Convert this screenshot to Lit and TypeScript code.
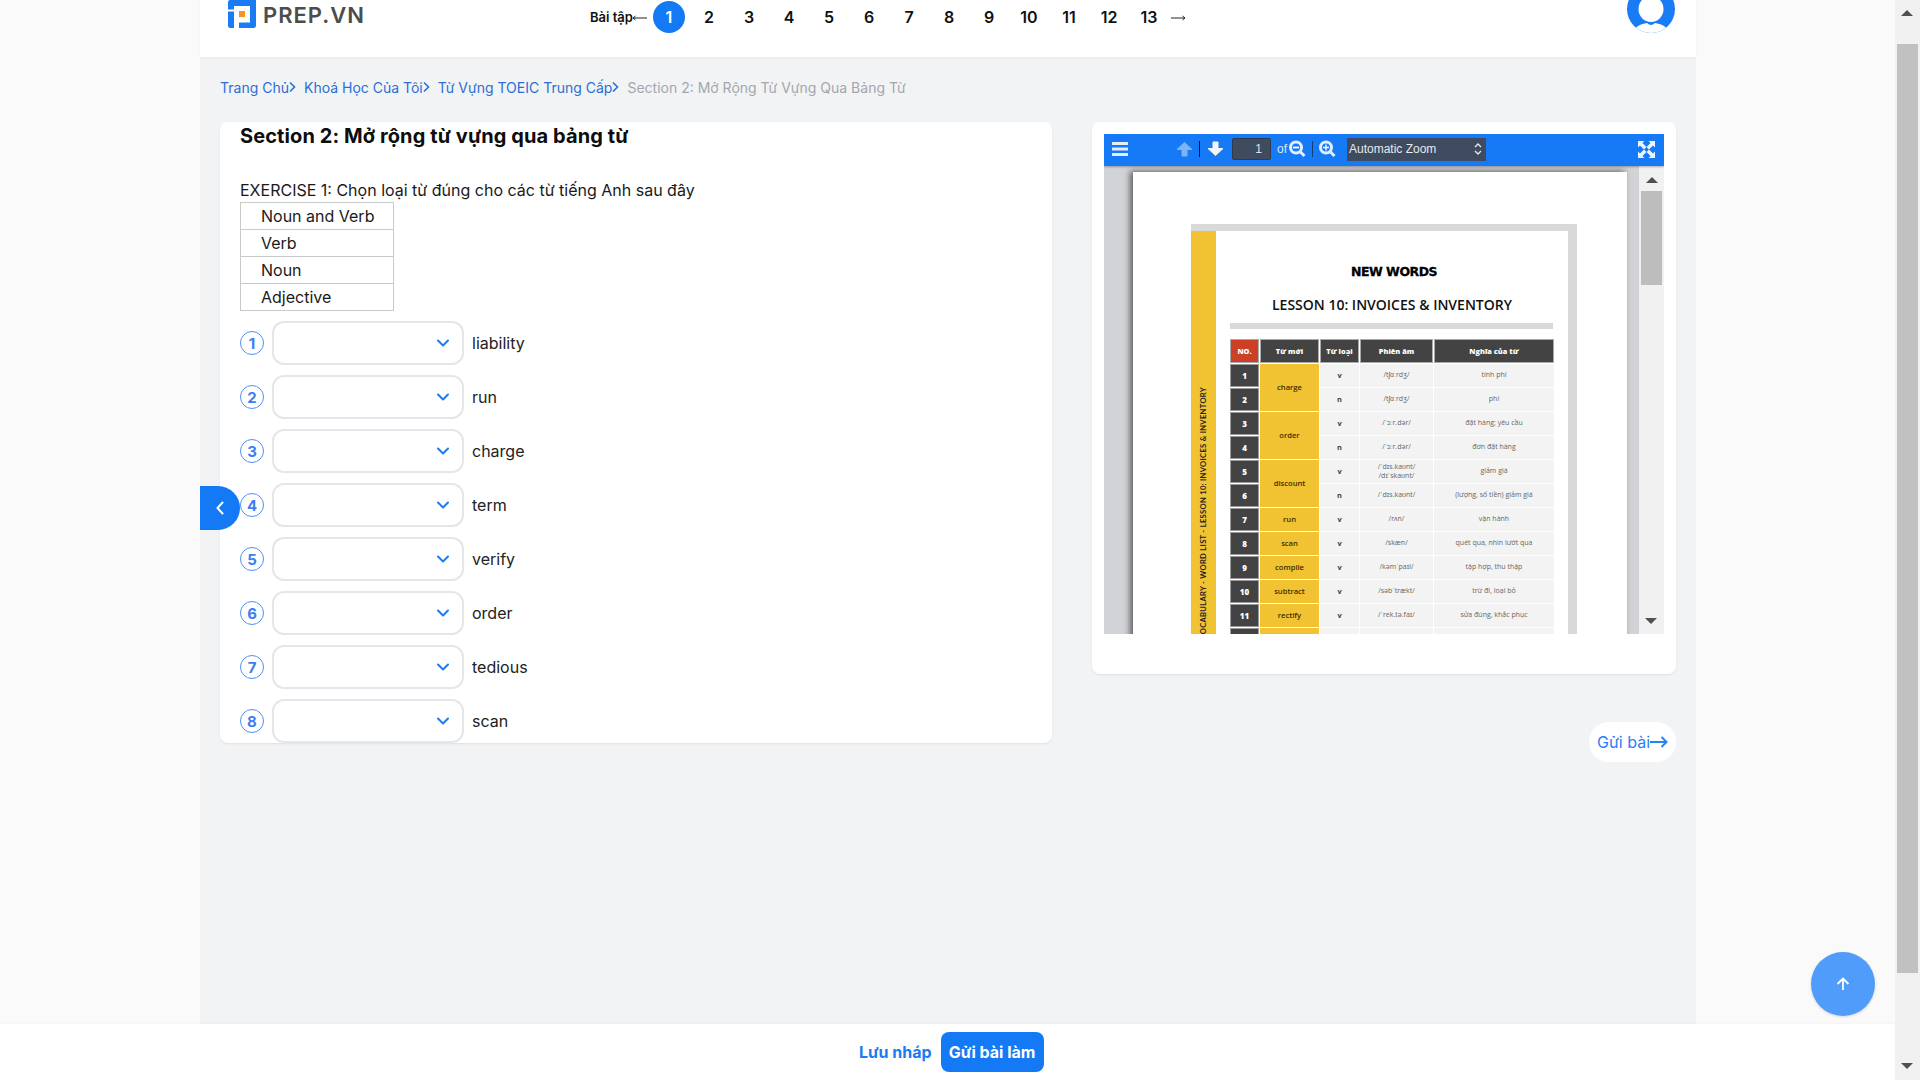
import { LitElement, html, css, svg } from "lit";
import { customElement } from "lit/decorators.js";

const chevron = svg`<path d="M1 1.5 L6 6.5 L11 1.5" fill="none" stroke="#1a7cf5" stroke-width="2" stroke-linecap="round" stroke-linejoin="round"/>`;

const rows = [
  ["1", "charge", 2, "v", "/tʃɑːrdʒ/", "tính phí"],
  ["2", "", 0, "n", "/tʃɑːrdʒ/", "phí"],
  ["3", "order", 2, "v", "/ˈɔːr.dər/", "đặt hàng; yêu cầu"],
  ["4", "", 0, "n", "/ˈɔːr.dər/", "đơn đặt hàng"],
  ["5", "discount", 2, "v", "/ˈdɪs.kaʊnt/\n/dɪˈskaʊnt/", "giảm giá"],
  ["6", "", 0, "n", "/ˈdɪs.kaʊnt/", "(lượng, số tiền) giảm giá"],
  ["7", "run", 1, "v", "/rʌn/", "vận hành"],
  ["8", "scan", 1, "v", "/skæn/", "quét qua, nhìn lướt qua"],
  ["9", "compile", 1, "v", "/kəmˈpaɪl/", "tập hợp, thu thập"],
  ["10", "subtract", 1, "v", "/səbˈtrækt/", "trừ đi, loại bỏ"],
  ["11", "rectify", 1, "v", "/ˈrek.tə.faɪ/", "sửa đúng, khắc phục"],
  ["", "", 1, "", "", ""],
] as const;

const words = ["liability", "run", "charge", "term", "verify", "order", "tedious", "scan"];
const kinds = ["Noun and Verb", "Verb", "Noun", "Adjective"];
const pages = Array.from({ length: 13 }, (_, i) => i + 1);

@customElement("app-root")
export class AppRoot extends LitElement {
  static styles = css`
    :host { display: flex; width: 1920px; height: 1080px; overflow: hidden; background: #fafafa; font-family: Inter, "Noto Sans", sans-serif; color: #1a1a1a; position: relative; }
    * { box-sizing: border-box; }
    .main { flex: 1; min-width: 0; display: flex; flex-direction: column; position: relative; }
    .wrap { flex: 1; width: 1496px; margin-left: 200px; background: #f2f3f5; display: flex; flex-direction: column; min-height: 0; position: relative; }

    .header { height: 57px; background: #fff; display: flex; align-items: flex-start; position: relative; overflow: hidden; box-shadow: 0 1px 2px rgba(0,0,0,.05); }
    .logo { display: flex; align-items: flex-start; margin-left: 28px; width: 362px; gap: 7px; }
    .logo svg { display: block; }
    .brand { font: 600 22px/1 Inter, sans-serif; color: #4d4d4d; letter-spacing: 1px; margin-top: 4px; }
    .pager { display: flex; align-items: center; height: 34px; font-weight: 600; }
    .pager .lbl { font-size: 13px; color: #111; width: 42px; white-space: nowrap; }
    .arrow { display: block; margin-top: 2px; }
    .pages { display: flex; margin-left: 5px; }
    .pg { width: 32px; height: 32px; margin-right: 8px; border-radius: 50%; display: flex; align-items: center; justify-content: center; font-size: 16px; color: #111; }
    .pg.on { background: #1479f5; color: #fff; }
    .pages + .arrow { margin-left: -3px; }
    .avatar { position: absolute; left: 1427px; top: -15px; width: 48px; height: 48px; border-radius: 50%; background: #1a7cf5; overflow: hidden; }

    .crumbs { display: flex; align-items: center; height: 60px; padding-left: 20px; font-size: 14px; color: #2b6fd4; white-space: nowrap; }
    .crumbs .it { display: flex; align-items: center; }
    .crumbs svg { margin: 0 8px 0 0; }
    .crumbs .cur { color: #a3a7ad; }

    .cols { display: flex; align-items: flex-start; padding-left: 20px; gap: 40px; margin-top: 5px; }
    .card { background: #fff; border-radius: 8px; box-shadow: 0 1px 2px rgba(0,0,0,.08); }
    .left { width: 832px; height: 621px; padding: 0 20px; }
    h1 { margin: 0; font-size: 20px; line-height: 28px; font-weight: 700; color: #0d0d0d; letter-spacing: .1px; }
    .ex { margin-top: 26px; font-size: 16px; line-height: 28px; height: 28px; margin-bottom: -2px; white-space: nowrap; }
    .tbl { width: 154px; border: 1px solid #c9c9c9; display: grid; grid-template-rows: 27px 27px 27px 26px; }
    .tbl div { padding-left: 20px; font-size: 16px; line-height: 26px; border-bottom: 1px solid #c9c9c9; }
    .tbl div:last-child { border-bottom: 0; }
    .q { display: flex; flex-direction: column; gap: 10px; margin-top: 10px; }
    .qr { display: flex; align-items: center; height: 44px; }
    .num { width: 24px; height: 24px; border-radius: 50%; border: 1px solid #4d8ff7; color: #3f7df0; font-size: 15px; font-weight: 700; display: flex; align-items: center; justify-content: center; flex: none; }
    .sel { margin-left: 8px; width: 192px; height: 44px; border: 2px solid #e5e6eb; border-radius: 12px; display: flex; align-items: center; justify-content: flex-end; padding-right: 13px; flex: none; }
    .qr span { margin-left: 8px; font-size: 16px; color: #222; }

    .right-col { width: 584px; display: flex; flex-direction: column; align-items: flex-end; }
    .right { width: 584px; height: 552px; padding: 12px; }
    .viewer { height: 500px; display: flex; flex-direction: column; overflow: hidden; background: #d1d3d7; }
    .bar { height: 32px; background: #167af6; display: flex; align-items: center; flex: none; color: #dfe9f7; box-shadow: 0 1px 2px rgba(0,0,0,.3); position: relative; z-index: 2; padding-bottom: 2px; }
    .bar svg { display: block; flex: none; }
    .sep { width: 1px; height: 16px; background: #0f3e78; flex: none; }
    .inp { width: 39px; height: 22px; background: #3f4b5e; border: 1px solid #2f3a4b; border-radius: 2px; color: #dfe3ea; font: 12px/20px "Liberation Sans", sans-serif; text-align: right; padding-right: 8px; margin-left: 8px; }
    .of { font: 12px "Liberation Sans", sans-serif; width: 11px; margin-left: 6px; }
    .zsel { margin-left: 11px; width: 139px; height: 23px; background: #3f4b5e; color: #e6e9ee; font: 12px/23px "Liberation Sans", sans-serif; padding-left: 2px; display: flex; justify-content: space-between; align-items: center; padding-right: 4px; }
    .vbody { flex: 1; display: flex; min-height: 0; }
    .pad { flex: 1; min-width: 0; padding: 6px 12px 0 29px; overflow: hidden; }
    .sheet { width: 494px; height: 700px; background: #fff; box-shadow: -3px -1px 6px rgba(0,0,0,.55); padding: 52px 0 0 58px; }
    .frame { width: 386px; background: #d9d9d9; padding-top: 7px; padding-right: 9px; }
    .inner { display: flex; background: #fff; height: 600px; }
    .spine { width: 25px; flex: none; background: #f1c232; display: flex; justify-content: center; align-items: flex-start; padding-top: 156px; overflow: hidden; }
    .spine div { writing-mode: vertical-rl; transform: rotate(180deg); font: 700 7.6px/1 Lato, sans-serif; letter-spacing: .3px; white-space: nowrap; color: #222; }
    .doc { flex: 1; min-width: 0; padding-left: 14px; }
    .nw { text-align: center; font: 700 12.5px/14px "DejaVu Sans", sans-serif; letter-spacing: -.5px; color: #000; margin-top: 34px; margin-right: 10px; -webkit-text-stroke: .3px #000; }
    .ls { text-align: center; font: 600 14px/16px "Open Sans", sans-serif; color: #111; margin-top: 18px; white-space: nowrap; margin-right: 14px; }
    .rule { height: 6px; width: 323px; background: #d9d9d9; margin-top: 10px; }
    .pt { display: grid; grid-template-columns: 29px 59px 39px 73px 120px; grid-template-rows: 24px; grid-auto-rows: 23px; gap: 1px; margin-top: 10px; width: 324px; font: 600 7px/1.15 "Open Sans", sans-serif; text-align: center; }
    .pt > div { display: flex; align-items: center; justify-content: center; }
    .th { background: #434343; color: #fff; font-weight: 800; font-size: 7.4px; outline: 1px solid #aaa; outline-offset: -1px; font-family: "Open Sans", sans-serif; }
    .th.no { background: #cc4125; }
    .n { background: #434343; color: #fff; font-weight: 800; font-size: 8px; font-family: "Open Sans", sans-serif; outline: 1px solid #9a9a9a; outline-offset: -1px; }
    .w { background: #f1c232; color: #3d2f00; font-size: 7.6px; }
    .c { background: #f3f3f3; color: #666; font-weight: 500; padding: 0 2px; white-space: pre-line; }
    .c.pos { color: #3f3f3f; font-weight: 700; font-size: 7.4px; }
    .vs { width: 25px; background: #f1f1f1; flex: none; display: flex; flex-direction: column; align-items: center; padding: 0 2px; position: relative; }
    .thumb { position: absolute; left: 2px; top: 25px; width: 21px; height: 94px; background: #bdbdbd; }
    .tu { width: 0; height: 0; border-left: 6px solid transparent; border-right: 6px solid transparent; border-bottom: 6px solid #505050; margin-top: 11px; }
    .td { width: 0; height: 0; border-left: 6px solid transparent; border-right: 6px solid transparent; border-top: 6px solid #505050; position: absolute; left: 6px; top: 452px; }

    .send { margin-top: 48px; width: 87px; height: 40px; background: #fff; border-radius: 20px; display: flex; align-items: center; justify-content: center; color: #2a80f5; font-size: 16px; white-space: nowrap; }

    .toggle { position: absolute; left: 0; top: 486px; width: 40px; height: 44px; background: #1479f5; border-radius: 0 22px 22px 0; display: flex; align-items: center; justify-content: center; }

    .foot { height: 56px; background: #fff; flex: none; display: flex; align-items: center; padding-left: 859px; gap: 9px; position: relative; box-shadow: 0 -2px 3px rgba(0,0,0,.02); }
    .save { color: #1a7cf5; font-size: 16px; font-weight: 700; white-space: nowrap; }
    .submit { width: 103px; height: 40px; background: #1479f5; color: #fff; border-radius: 8px; font-size: 16px; font-weight: 700; display: flex; align-items: center; justify-content: center; white-space: nowrap; }
    .top { position: absolute; left: 1811px; top: 952px; width: 64px; height: 64px; border-radius: 50%; background: #4f9cfa; display: flex; align-items: center; justify-content: center; box-shadow: 0 1px 3px rgba(0,0,0,.15); }

    .sb { width: 25px; flex: none; background: #f1f1f1; position: relative; }
    .sb .thumb { left: 2px; top: 44px; height: 929px; background: #c1c1c1; }
    .sb .tu { position: absolute; left: 6px; top: 0; margin-top: 10px; }
    .sb .td { left: 6px; top: 1063px; }
  `;

  private crumb(t: string) {
    return html`<div class="it">${t}<svg width="7" height="12" viewBox="0 0 7 12"><path d="M1 1.5 L5.5 6 L1 10.5" fill="none" stroke="#2b6fd4" stroke-width="1.6"/></svg></div>`;
  }

  render() {
    return html`
      <div class="main">
        <div class="wrap">
          <div class="header">
            <div class="logo">
              <svg width="28" height="28" viewBox="0 0 28 28">
                <path d="M2 0 H28 V25.5 Q28 28 25.5 28 H11 V22.5 H22 V6 H6 V9.5 H0 V2 Q0 0 2 0 Z" fill="#1a7cf5"/>
                <path d="M0 11.5 H6 V28 H2.5 Q0 28 0 25.5 Z" fill="#1a7cf5"/>
                <rect x="11" y="11" width="6" height="6" fill="#f7941d"/>
              </svg>
              <div class="brand">PREP.VN</div>
            </div>
            <div class="pager">
              <div class="lbl">Bài tập</div>
              <svg class="arrow" width="16" height="8" viewBox="0 0 16 8"><path d="M15 4 H1 M3.5 2 L1 4 L3.5 6" fill="none" stroke="#222" stroke-width="1"/></svg>
              <div class="pages">${pages.map((p) => html`<div class="pg ${p === 1 ? "on" : ""}">${p}</div>`)}</div>
              <svg class="arrow" width="16" height="8" viewBox="0 0 16 8"><path d="M1 4 H15 M12.5 2 L15 4 L12.5 6" fill="none" stroke="#222" stroke-width="1"/></svg>
            </div>
            <div class="avatar">
              <svg width="48" height="48" viewBox="0 0 48 48">
                <ellipse cx="24" cy="24" rx="12.5" ry="13" fill="#fff"/>
                <path d="M6 48 C8 41 14 39 20 38 Q24 42 28 38 C34 39 40 41 42 48 Z" fill="#fff"/>
              </svg>
            </div>
          </div>
          <div class="crumbs">
            ${this.crumb("Trang Chủ")}${this.crumb("Khoá Học Của Tôi")}${this.crumb("Từ Vựng TOEIC Trung Cấp")}
            <div class="it cur">Section 2: Mở Rộng Từ Vựng Qua Bảng Từ</div>
          </div>
          <div class="cols">
            <div class="card left">
              <h1>Section 2: Mở rộng từ vựng qua bảng từ</h1>
              <div class="ex">EXERCISE 1: Chọn loại từ đúng cho các từ tiếng Anh sau đây</div>
              <div class="tbl">${kinds.map((k) => html`<div>${k}</div>`)}</div>
              <div class="q">
                ${words.map((w, i) => html`
                  <div class="qr">
                    <div class="num">${i + 1}</div>
                    <div class="sel"><svg width="12" height="8" viewBox="0 0 12 8">${chevron}</svg></div>
                    <span>${w}</span>
                  </div>`)}
              </div>
            </div>
            <div class="right-col">
              <div class="card right">
                <div class="viewer">
                  <div class="bar">
                    <svg style="margin-left:8px" width="16" height="14" viewBox="0 0 16 14"><path d="M0 1.5 H16 M0 7 H16 M0 12.5 H16" stroke="#e4eefb" stroke-width="3"/></svg>
                    <svg style="margin-left:48px;opacity:.5" width="17" height="16" viewBox="0 0 17 16"><path d="M8.5 1.5 L16 8.5 H11 V15 H6 V8.5 H1 Z" fill="#e4eefb" stroke="#e4eefb" stroke-linejoin="round"/></svg>
                    <div class="sep" style="margin-left:6px;background:#111"></div>
                    <svg style="margin-left:7px" width="17" height="16" viewBox="0 0 17 16"><path d="M8.5 14.5 L16 7.5 H11 V1 H6 V7.5 H1 Z" fill="#f2f6fc" stroke="#f2f6fc" stroke-linejoin="round"/></svg>
                    <div class="inp">1</div>
                    <div class="of">of</div>
                    <svg width="17" height="18" viewBox="0 0 17 18" style="margin-left:1px"><circle cx="7" cy="7.5" r="5.5" fill="#167af6" stroke="#e4eefb" stroke-width="3"/><path d="M4 7.5 H10" stroke="#fff" stroke-width="1.8"/><path d="M11 11.5 L15.5 16" stroke="#e4eefb" stroke-width="3"/></svg>
                    <div class="sep" style="margin-left:6px"></div>
                    <svg width="17" height="18" viewBox="0 0 17 18" style="margin-left:6px"><circle cx="7" cy="7.5" r="5.5" fill="#167af6" stroke="#e4eefb" stroke-width="3"/><path d="M4 7.5 H10 M7 4.5 V10.5" stroke="#fff" stroke-width="1.4"/><path d="M11 11.5 L15.5 16" stroke="#e4eefb" stroke-width="3"/></svg>
                    <div class="zsel">Automatic Zoom
                      <svg width="8" height="14" viewBox="0 0 8 14"><path d="M1 5 L4 2 L7 5 M1 9 L4 12 L7 9" fill="none" stroke="#e6e9ee" stroke-width="1.4"/></svg>
                    </div>
                    <svg style="margin-left:152px" width="17" height="17" viewBox="0 0 17 17"><path d="M0 0 H6.5 L4.5 2 L8.5 6 L6 8.5 L2 4.5 L0 6.5 Z M17 0 V6.5 L15 4.5 L11 8.5 L8.5 6 L12.5 2 L10.5 0 Z M0 17 V10.5 L2 12.5 L6 8.5 L8.5 11 L4.5 15 L6.5 17 Z M17 17 H10.5 L12.5 15 L8.5 11 L11 8.5 L15 12.5 L17 10.5 Z" fill="#eef4fc" fill-rule="evenodd"/></svg>
                  </div>
                  <div class="vbody">
                    <div class="pad">
                      <div class="sheet">
                        <div class="frame">
                          <div class="inner">
                            <div class="spine"><div>VOCABULARY - WORD LIST - LESSON 10: INVOICES & INVENTORY</div></div>
                            <div class="doc">
                              <div class="nw">NEW WORDS</div>
                              <div class="ls">LESSON 10: INVOICES & INVENTORY</div>
                              <div class="rule"></div>
                              <div class="pt">
                                <div class="th no">NO.</div><div class="th">Từ mới</div><div class="th">Từ loại</div><div class="th">Phiên âm</div><div class="th">Nghĩa của từ</div>
                                ${rows.map((r) => html`
                                  <div class="n">${r[0]}</div>
                                  ${r[2] ? html`<div class="w" style="grid-row: span ${r[2]}; grid-column: 2">${r[1]}</div>` : ""}
                                  <div class="c pos" style="grid-column: 3">${r[3]}</div>
                                  <div class="c">${r[4]}</div>
                                  <div class="c">${r[5]}</div>`)}
                              </div>
                            </div>
                          </div>
                        </div>
                      </div>
                    </div>
                    <div class="vs"><div class="tu"></div><div class="thumb"></div><div class="td"></div></div>
                  </div>
                </div>
              </div>
              <div class="send">Gửi bài<svg width="18" height="12" viewBox="0 0 18 12"><path d="M0 6 H16.5 M11.5 1 L16.5 6 L11.5 11" fill="none" stroke="#2a80f5" stroke-width="2"/></svg></div>
            </div>
          </div>
          <div class="toggle"><svg width="8" height="14" viewBox="0 0 8 14"><path d="M6.5 1.5 L1.5 7 L6.5 12.5" fill="none" stroke="#fff" stroke-width="2" stroke-linecap="round"/></svg></div>
        </div>
        <div class="foot">
          <div class="save">Lưu nháp</div>
          <div class="submit">Gửi bài làm</div>
        </div>
        <div class="top"><svg width="14" height="14" viewBox="0 0 14 14"><path d="M7 13 V1.5 M1.5 7 L7 1.5 L12.5 7" fill="none" stroke="#fff" stroke-width="1.8"/></svg></div>
      </div>
      <div class="sb"><div class="tu"></div><div class="thumb"></div><div class="td"></div></div>
    `;
  }
}
